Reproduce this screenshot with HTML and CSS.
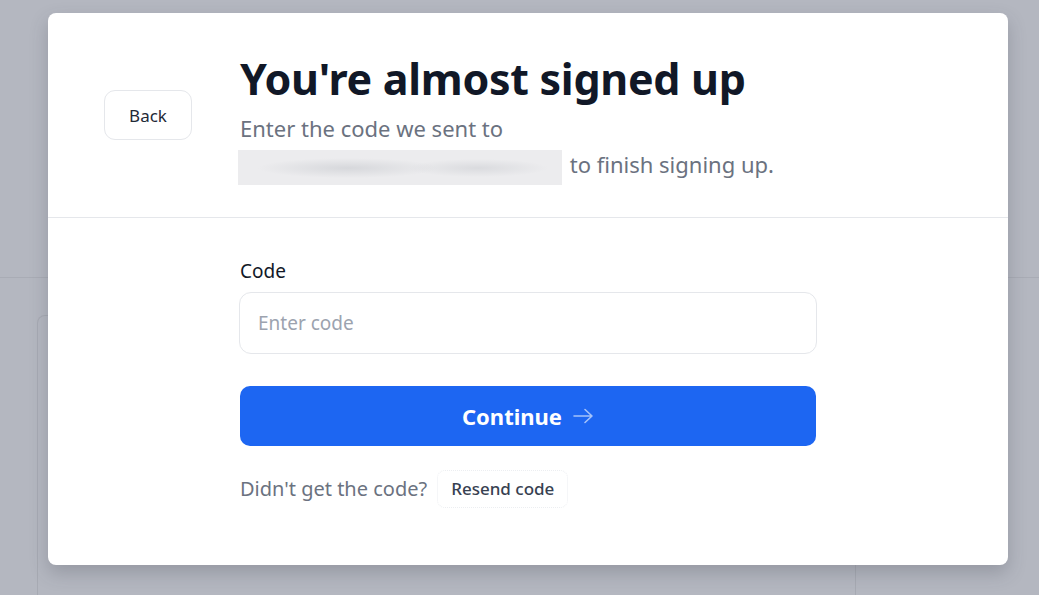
FILE: index.html
```html
<!DOCTYPE html>
<html lang="en">
<head>
<meta charset="utf-8">
<title>You're almost signed up</title>
<link rel="stylesheet" href="styles.css">
</head>
<body>
<div class="page">
  <div class="page-header"></div>
  <div class="page-body">
    <div class="page-card"></div>
  </div>
</div>
<div class="overlay">
  <div class="modal">
    <div class="modal-head">
      <button class="btn-back" type="button">Back</button>
      <div class="head-text">
        <h1 class="title">You're almost signed up</h1>
        <p class="subtitle">Enter the code we sent to<br><span class="redacted"></span> to finish signing up.</p>
      </div>
    </div>
    <div class="modal-body">
      <div class="form">
        <label class="label" for="code">Code</label>
        <input id="code" class="input" type="text" placeholder="Enter code">
        <button class="btn-primary" type="button">Continue
          <svg class="arrow" width="22" height="16" viewBox="0 0 22 16" fill="none" stroke="currentColor" stroke-width="1.6" stroke-linecap="round" stroke-linejoin="round"><path d="M2 8h18M13 1.5 20 8l-7 6.5"/></svg>
        </button>
        <div class="resend-row">
          <span class="muted">Didn't get the code?</span>
          <button class="btn-resend" type="button">Resend code</button>
        </div>
      </div>
    </div>
  </div>
</div>
</body>
</html>
```

FILE: styles.css
```css
* { box-sizing: border-box; }
html, body { margin: 0; padding: 0; }
body {
  width: 1039px;
  height: 595px;
  overflow: hidden;
  position: relative;
  background: #b4b7c0;
  font-family: "Noto Sans", "Open Sans", sans-serif;
}
.page { height: 595px; overflow: hidden; }
.page-header {
  height: 278px;
  border-bottom: 1px solid #a9acb5;
}
.page-body {
  height: 317px;
  padding: 37px 0 0 37px;
  overflow: hidden;
}
.page-card {
  width: 819px;
  height: 300px;
  border: 1px solid #a7aab3;
  border-bottom: 0;
  border-radius: 8px 8px 0 0;
}
.overlay {
  position: absolute;
  inset: 0;
}
.modal {
  position: absolute;
  left: 48px;
  top: 13px;
  width: 960px;
  height: 552px;
  background: #ffffff;
  border-radius: 8px;
  box-shadow: 0 8px 18px rgba(60, 64, 75, 0.25);
}
.modal-head {
  display: flex;
  align-items: center;
  gap: 48px;
  padding: 38px 0 32px 56px;
  border-bottom: 1px solid #e5e7eb;
}
.btn-back {
  width: 88px;
  height: 50px;
  background: #fff;
  border: 1px solid #e5e7eb;
  border-radius: 11px;
  font-family: inherit;
  font-size: 17px;
  color: #1f2937;
  margin-top: -5px;
}
.head-text { width: 576px; }
.title {
  margin: 0;
  font-size: 43px;
  line-height: 56px;
  font-weight: 700;
  color: #111827;
  letter-spacing: -0.3px;
}
.subtitle {
  margin: 3px 0 0;
  font-size: 22px;
  line-height: 36px;
  color: #6b7280;
}
.redacted {
  display: inline-block;
  vertical-align: middle;
  width: 324px;
  height: 35px;
  margin: 0 2px 0 -2px;
  background:
    radial-gradient(ellipse 90px 10px at 110px 18px, rgba(200,202,207,0.6), transparent),
    radial-gradient(ellipse 70px 9px at 240px 18px, rgba(200,202,207,0.5), transparent),
    #ececee;
}
.modal-body {
  display: flex;
  justify-content: center;
  padding: 40px 0 0;
}
.form { width: 576px; }
.label {
  display: block;
  font-size: 19px;
  line-height: 26px;
  color: #111827;
  font-weight: 400;
}
.input {
  display: block;
  width: 578px;
  height: 62px;
  margin: 8px 0 0 -1px;
  border: 1px solid #e5e7eb;
  border-radius: 12px;
  padding: 0 18px;
  font-family: inherit;
  font-size: 19px;
  color: #111827;
  outline: none;
}
.input::placeholder { color: #9ca3af; }
.btn-primary {
  display: flex;
  align-items: center;
  justify-content: center;
  gap: 10px;
  width: 576px;
  height: 60px;
  margin-top: 32px;
  border: 0;
  border-radius: 10px;
  background: #1d66f2;
  color: #ffffff;
  font-family: inherit;
  font-size: 22px;
  font-weight: 700;
}
.arrow { color: rgba(255,255,255,0.6); }
.resend-row {
  display: flex;
  align-items: center;
  gap: 10px;
  margin-top: 24px;
}
.muted {
  font-size: 20px;
  color: #6b7280;
}
.btn-resend {
  height: 38px;
  padding: 0 13px;
  background: #fff;
  border: 1px dotted #eceef1;
  border-radius: 8px;
  font-family: inherit;
  font-size: 17px;
  font-weight: 500;
  color: #374151;
}
```
